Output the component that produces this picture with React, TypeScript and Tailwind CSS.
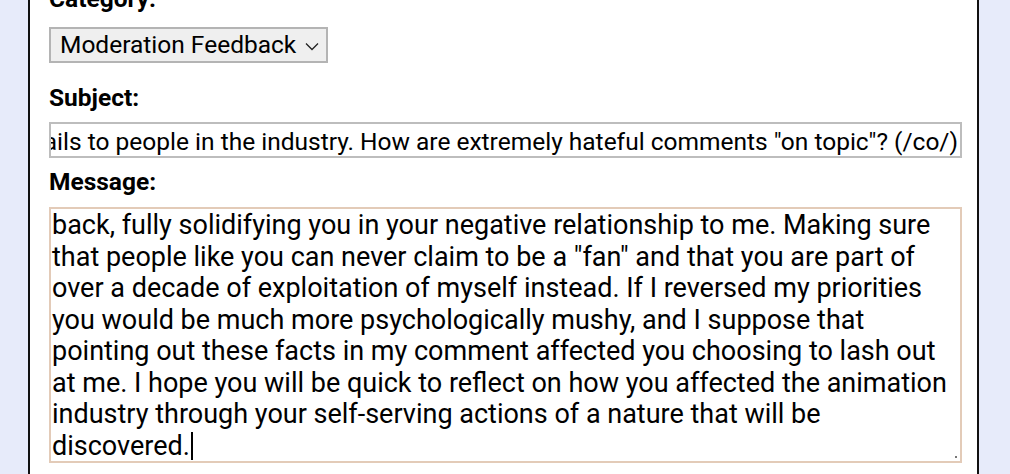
import React from "react";

const lines = [
  "back, fully solidifying you in your negative relationship to me. Making sure",
  "that people like you can never claim to be a \"fan\" and that you are part of",
  "over a decade of exploitation of myself instead. If I reversed my priorities",
  "you would be much more psychologically mushy, and I suppose that",
  "pointing out these facts in my comment affected you choosing to lash out",
  "at me. I hope you will be quick to reflect on how you affected the animation",
  "industry through your self-serving actions of a nature that will be",
  "discovered.",
];

export default function App() {
  return (
    <div className="flex h-[474px] w-[1010px] overflow-hidden bg-[#e7ebfa] font-['Roboto',sans-serif] text-black">
      <div className="w-[28px] shrink-0" />
      <div className="-mt-[14px] w-[951px] shrink-0 border-x-2 border-[#111] bg-white pl-[19px] pr-[15px]">
        <div className="text-[24.5px] font-bold leading-[26px]">Category:</div>
        <div className="mt-[15px] flex h-[36px] w-[279px] items-center border-2 border-[#b4b4b4] bg-[#efefef] pl-[9px] text-[24.5px]">
          <span>Moderation Feedback</span>
          <svg className="ml-[9px] mt-[2px]" width="14" height="9" viewBox="0 0 14 9" fill="none">
            <path d="M1 1.5 L7 7.5 L13 1.5" stroke="#222" strokeWidth="1.3" />
          </svg>
        </div>
        <div className="mt-[22px] text-[24.5px] font-bold leading-[26px]">Subject:</div>
        <div className="mt-[11px] flex h-[36px] w-[913px] items-center justify-end overflow-hidden border-2 border-[#bdbdbd] pr-[2px] pt-[5px] text-[24.5px]">
          <span className="whitespace-nowrap">
            Why do moderators allow users to send threatening emails to people in the industry. How are extremely hateful comments "on topic"? (/co/)
          </span>
        </div>
        <div className="mt-[11px] text-[24.5px] font-bold leading-[26px]">Message:</div>
        <div className="relative mt-[12px] h-[256px] w-[913px] border-2 border-[#e3cbb8] pl-[1px] pt-[1px] text-[27px] leading-[31.5px]">
          {lines.map((l, i) => (
            <div key={i} className="whitespace-nowrap">
              {l}
              {i === lines.length - 1 && (
                <span className="ml-[1px] inline-block h-[28px] w-[2px] bg-black align-[-5px]" />
              )}
            </div>
          ))}
          <div className="absolute bottom-[3px] right-[3px] h-[2px] w-[2px] bg-[#777]" />
        </div>
      </div>
      <div className="flex-1" />
    </div>
  );
}
